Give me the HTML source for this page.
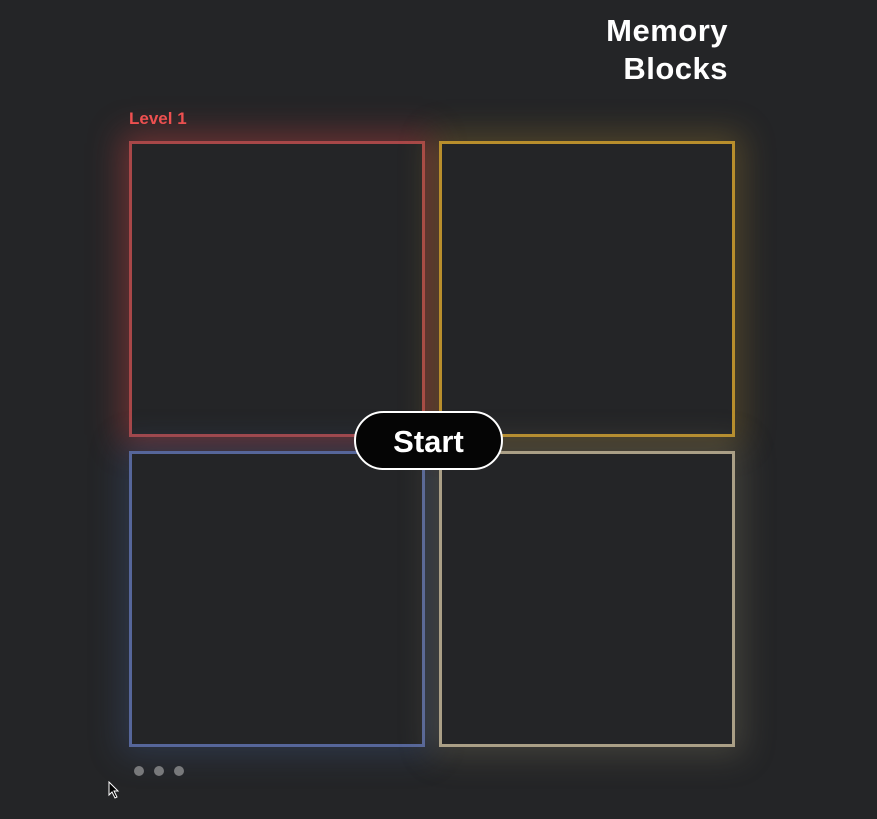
<!DOCTYPE html>
<html><head><style>
html,body{margin:0;padding:0;background:#242527;width:877px;height:819px;overflow:hidden;font-family:"Liberation Sans",sans-serif;}
.t{position:absolute;right:149px;top:12px;text-align:right;color:#fff;font-weight:bold;font-size:31px;line-height:38px;letter-spacing:0.5px;}
.lv{position:absolute;left:129px;top:109px;color:#f25252;font-weight:bold;font-size:17px;}
.b{position:absolute;width:290px;height:290px;border:3px solid;background:#242527;}
.r{left:129px;top:141px;border-color:#a84748;box-shadow:0 0 30px 8px rgba(190,65,65,.45);}
.y{left:439px;top:141px;border-color:#b88e2c;box-shadow:0 0 30px 8px rgba(180,140,50,.3);}
.bl{left:129px;top:451px;border-color:#56669a;box-shadow:0 0 30px 8px rgba(70,95,150,.3);}
.be{left:439px;top:451px;border-color:#aa9f86;box-shadow:0 0 30px 8px rgba(160,150,120,.25);}
.s{position:absolute;left:354px;top:411px;width:145px;height:55px;border:2px solid #fff;border-radius:30px;background:#050505;color:#fff;font-weight:bold;font-size:31px;text-align:center;line-height:57px;}
.d{position:absolute;top:766px;width:10px;height:10px;border-radius:50%;background:#78797b;}
</style></head><body>
<div class="t">Memory<br>Blocks</div>
<div class="lv">Level 1</div>
<div class="b r"></div><div class="b y"></div><div class="b bl"></div><div class="b be"></div>
<div class="s">Start</div>
<div class="d" style="left:134px"></div><div class="d" style="left:154px"></div><div class="d" style="left:174px"></div>
<svg style="position:absolute;left:108px;top:781px" width="12" height="18"><path d="M1 1 L1 14 L4 11 L7 17 L9 16 L6 10 L10 10 Z" fill="#000" stroke="#fff" stroke-width="1"/></svg>
</body></html>
